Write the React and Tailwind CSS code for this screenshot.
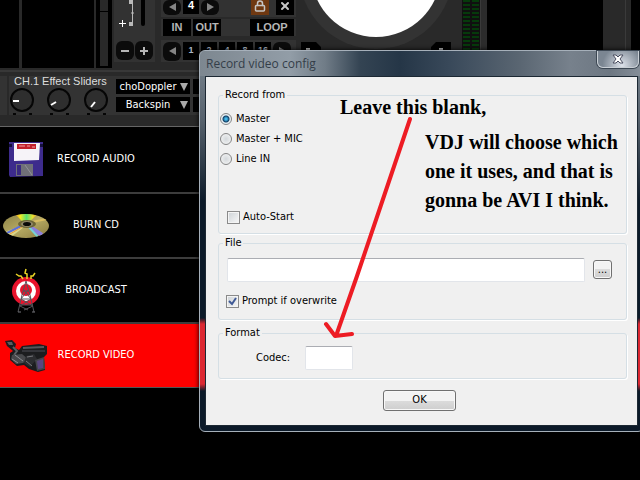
import { Lock, X } from 'lucide-react';
import clsx from 'clsx';

const tahoma = "font-['DejaVu_Sans_Condensed','DejaVu_Sans',sans-serif]";

const loopSizes = ['1', '2', '4', '8', '16'];

const effects = ['choDoppler', 'Backspin'];

const menuItems = [
  { label: 'RECORD AUDIO', icon: FloppyIcon },
  { label: 'BURN CD', icon: DiscIcon },
  { label: 'BROADCAST', icon: BroadcastIcon },
  { label: 'RECORD VIDEO', icon: CameraIcon, active: true },
];

function FloppyIcon() {
  return (
    <svg width="36" height="36" viewBox="0 0 36 36" aria-hidden="true">
      <path d="M1 0H35V34L2 35L1 33Z" fill="#3d2b8c" />
      <path d="M1 2H4V5H1ZM32 2H35V5H32Z" fill="#15103c" />
      <path d="M6 1H32L31 18L6 19Z" fill="#f6f3f8" />
      <path d="M9 2H28V7H9Z" fill="#c3202c" />
      <path d="M11 4H17M19 4H22M24 5H27" stroke="#f0a0a4" />
      <path d="M8 22H25V34H8Z" fill="#707078" />
      <path d="M9 23H13V33H9Z" fill="#3a2a80" />
      <path d="M17 23L24 33" stroke="#92929a" />
    </svg>
  );
}

function DiscIcon() {
  return (
    <svg width="48" height="26" viewBox="0 0 48 26" aria-hidden="true">
      <defs>
        <linearGradient id="disc" x1="0" y1="0" x2="1" y2="1">
          <stop offset="0" stopColor="#8c8246" />
          <stop offset="0.5" stopColor="#b5a962" />
          <stop offset="1" stopColor="#887a40" />
        </linearGradient>
        <linearGradient id="shine" x1="0" x2="1">
          <stop offset="0" stopColor="#f07820" />
          <stop offset="0.25" stopColor="#f4ec20" />
          <stop offset="0.5" stopColor="#58e070" />
          <stop offset="0.75" stopColor="#e8e030" />
          <stop offset="1" stopColor="#d87830" />
        </linearGradient>
        <clipPath id="rim"><ellipse cx="24" cy="13" rx="23" ry="12" /></clipPath>
      </defs>
      <ellipse cx="24" cy="13" rx="23" ry="12" fill="url(#disc)" />
      <g clipPath="url(#rim)">
        <path d="M12 0H37L27 9H21Z" fill="url(#shine)" />
        <path d="M18 13L3 19L9 24L22 14Z" fill="#d8d68a" />
        <path d="M19 13L5 20" stroke="#5d70d8" strokeWidth="2" />
        <path d="M20 14L8 21" stroke="#ef9b38" strokeWidth="1" />
        <path d="M28 14L40 22" stroke="#8d80dc" strokeWidth="4" />
        <path d="M27 14L36 24" stroke="#77d0d4" strokeWidth="2" />
        <path d="M30 9L45 6" stroke="#d9bd62" strokeWidth="2" />
      </g>
      <ellipse cx="25" cy="11" rx="9" ry="4" fill="#6c6535" />
      <ellipse cx="25" cy="11" rx="6" ry="3" fill="#8f8768" />
      <ellipse cx="25" cy="11" rx="4" ry="2" fill="#0a0a08" />
    </svg>
  );
}

function BroadcastIcon() {
  return (
    <svg width="30" height="46" viewBox="0 0 30 46" aria-hidden="true">
      <circle cx="15" cy="23" r="14" fill="#e8132c" />
      <circle cx="15" cy="23" r="10" fill="#fff" />
      <circle cx="15" cy="22" r="6" fill="#e8132c" />
      <path d="M16 11V6L14 5L15 1M12 11L10 8H8L5 6M20 11V8L22 8L24 5" stroke="#e8d326" strokeWidth="1.5" fill="none" />
      <path d="M15 13L11 27L7 44M15 13L19 27L23 44M12 23H18M10 31H20M9 37H22M13 22L20 31L9 38L17 42M17 22L10 31L22 38L13 42" stroke="#55555a" fill="none" />
      <path d="M7 44H10M21 44H24" stroke="#77777c" />
    </svg>
  );
}

function CameraIcon() {
  return (
    <svg width="44" height="34" viewBox="0 0 44 34" aria-hidden="true">
      <path d="M1 2L8 1L12 5L11 9L15 11L18 7L35 5L43 7V15L40 18L41 31L34 33L25 30L20 26L13 27L6 21V14L9 12L3 7Z" fill="#1c1d1f" />
      <path d="M3 3L8 3L9 6L5 6Z" fill="#5a5c60" />
      <path d="M9 8L13 12L10 16" stroke="#5c5e62" strokeWidth="2" fill="none" />
      <path d="M19 9L40 8" stroke="#55565a" strokeWidth="2" />
      <path d="M18 12L41 12" stroke="#34353a" strokeWidth="2" />
      <path d="M8 16L18 15L24 20L19 24L12 25L7 20Z" fill="#48494c" />
      <path d="M8 20L14 24M11 16L19 22" stroke="#8b8c90" />
      <path d="M22 17L30 15L33 20L26 28L20 24Z" fill="#2c2d30" />
      <path d="M23 18L29 17M22 22L28 27" stroke="#76777b" />
      <path d="M31 21L40 18L41 30L33 32Z" fill="#45464b" />
      <path d="M33 22L39 20L39 29L34 30Z" fill="#5a4580" />
    </svg>
  );
}

function Triangle({ left }) {
  return (
    <svg width="7" height="8" viewBox="0 0 7 8" aria-hidden="true">
      <path d={left ? 'M7 0V8L0 4Z' : 'M0 0V8L7 4Z'} fill="#858585" />
    </svg>
  );
}

function RoundButton({ label, className, children }) {
  return (
    <button
      aria-label={label}
      className={clsx('flex w-[18px] shrink-0 items-center justify-center rounded-md bg-[#0b0b0b]', className)}
    >
      {children}
    </button>
  );
}

function PadButton({ className, children }) {
  return (
    <button
      className={clsx("h-[17px] bg-black font-['Liberation_Sans',sans-serif] text-[11px] leading-[17px] font-bold text-[#b5b5b5]", className)}
    >
      {children}
    </button>
  );
}

function PitchPanel() {
  return (
    <div className="ml-0.5 flex h-[62px] w-[41px] shrink-0 flex-col items-center justify-between bg-[#323232] pb-0.5">
      <svg width="41" height="28" viewBox="0 0 41 28" aria-hidden="true">
        <path d="M15 0H19V26H15V22H18V4H15Z" fill="#b9b9b9" />
        <path d="M17 13H20" stroke="#b9b9b9" />
        <path d="M8.5 20V27M5 23.5H12" stroke="#fff" />
        <path d="M29 0V24" stroke="#000" strokeWidth="4" strokeLinecap="round" />
      </svg>
      <div className="flex gap-px">
        <RoundButton label="Pitch down" className="h-[19px]">
          <svg width="8" height="8"><path d="M0 4H8" stroke="#b5b5b5" strokeWidth="2" /></svg>
        </RoundButton>
        <RoundButton label="Pitch up" className="h-[19px]">
          <svg width="8" height="8"><path d="M0 4H8M4 0V8" stroke="#b5b5b5" strokeWidth="2" /></svg>
        </RoundButton>
      </div>
    </div>
  );
}

function LoopPanel() {
  return (
    <div className="ml-1.5 flex w-[135px] shrink-0 flex-col">
      <div className="flex h-[17px] items-start bg-[#323232] px-0.5">
        <RoundButton label="Shorter loop" className="h-[15px] pb-0.5"><Triangle left /></RoundButton>
        <span className="mx-0.5 h-[14px] w-4 bg-black text-center font-['Liberation_Sans',sans-serif] text-[11px] leading-[10px] font-bold text-white">4</span>
        <RoundButton label="Longer loop" className="h-[15px] pb-0.5"><Triangle /></RoundButton>
        <button aria-label="Lock" className="ml-auto flex h-[15px] w-[18px] items-center justify-center bg-[#6f3811] pb-1">
          <Lock className="size-3 text-[#c5c5c5]" strokeWidth={3} />
        </button>
        <button aria-label="Clear loop" className="ml-[7px] flex h-[15px] w-[18px] items-center justify-center bg-black pb-1">
          <X className="size-3 text-[#c5c5c5]" strokeWidth={4} />
        </button>
      </div>
      <div className="mt-0.5 flex gap-0.5 bg-[#323232] px-0.5">
        <PadButton className="w-7">IN</PadButton>
        <PadButton className="w-7">OUT</PadButton>
        <PadButton className="ml-auto w-11">LOOP</PadButton>
      </div>
      <div className="mt-1 flex h-[22px] items-center gap-0.5 bg-[#323232] px-0.5">
        <RoundButton label="Previous" className="h-[19px]"><Triangle left /></RoundButton>
        {loopSizes.map((size) => (
          <button
            key={size}
            className="h-[18px] w-4 shrink-0 bg-black font-['Liberation_Sans',sans-serif] text-[9px] font-bold text-[#a9b6c4]"
          >
            {size}
          </button>
        ))}
        <RoundButton label="Next" className="h-[19px]"><Triangle /></RoundButton>
      </div>
    </div>
  );
}

function Deck() {
  return (
    <div className="flex h-[70px] overflow-hidden bg-[#292929]">
      <div className="h-[68px] w-[19px] shrink-0 bg-black" />
      <div className="ml-[3px] h-[68px] w-[72px] shrink-0 bg-black" />
      <div className="ml-0.5 flex h-[68px] w-4 shrink-0 flex-col gap-px bg-black px-1 pb-0.5">
        <div className="h-[11px] bg-[#292929]" />
        <div className="flex-1 bg-[#292929]" />
      </div>
      <PitchPanel />
      <LoopPanel />
      <svg className="shrink-0" width="166" height="69" viewBox="297 0 166 69" aria-label="Platter">
        <circle cx="377" cy="-28" r="77" fill="#333" />
        <circle cx="377" cy="-28" r="65" fill="#fff" />
        <path d="M302 42H317L322 47V60H302ZM452 42H437L432 47V60H452Z" fill="#000" />
        <path d="M307 49H311M440 49H444" stroke="#bbb" strokeWidth="2" />
      </svg>
      <div className="flex w-[18px] shrink-0 justify-center gap-0.5 bg-[#101010]">
        <div className="w-[7px] bg-[repeating-linear-gradient(#063a0b_0_2px,#101010_2px_4px)]" />
        <div className="w-[7px] bg-[repeating-linear-gradient(#063a0b_0_2px,#101010_2px_4px)]" />
      </div>
      <div className="w-[7px] shrink-0 border-l border-[#3a3a3a] bg-[#2c2c2c]" />
      <div className="flex-1 bg-black" />
      <div className="flex w-7 shrink-0 justify-end bg-[#292929]">
        <div className="w-1.5 border-l border-[#3a3a3a]" />
      </div>
      <div className="w-[9px] shrink-0 bg-black" />
    </div>
  );
}

function Knob({ needle }) {
  return (
    <svg width="25" height="28" viewBox="0 0 25 28" aria-hidden="true">
      <circle cx="12" cy="13" r="11" fill="#2e2e2e" stroke="#060606" strokeWidth="2" />
      <path d={needle} stroke="#fff" strokeWidth="2" />
      <path d="M3 27H6M19 27H22" stroke="#050505" strokeWidth="2" />
    </svg>
  );
}

function EffectRow() {
  return (
    <div className="border-t-2 border-b border-t-[#383838] border-b-[#666] bg-[#292929] pt-1 pb-[11px]">
      <div className="flex h-[39px] bg-[#333]">
        <div className="w-[9px] shrink-0 border-r-2 border-[#292929]" />
        <div className="w-[107px] shrink-0 pl-px">
          <p className="pl-1 font-['Liberation_Sans',sans-serif] text-[11px] leading-[11px] whitespace-nowrap text-[#ddd]">
            CH.1 Effect Sliders
          </p>
          <div className="flex gap-3">
            <Knob needle="M3 14H9" />
            <Knob needle="M4 18L9 15" />
            <Knob needle="M7 20L11 15" />
          </div>
        </div>
        <div className="flex flex-col gap-[3px] pt-[3px]">
          {effects.map((effect) => (
            <div key={effect} className="flex items-center gap-[3px]">
              <label className="flex h-[15px] w-[74px] items-center bg-black pr-0.5">
                <select
                  aria-label="Effect"
                  className={clsx('w-full appearance-none bg-transparent text-center text-[11px] leading-[15px] text-white', tahoma)}
                >
                  <option>{effect}</option>
                </select>
                <svg className="shrink-0" width="8" height="8" viewBox="0 0 8 8"><path d="M0 0H8L4 8Z" fill="#aaa" /></svg>
              </label>
              <div className="h-[15px] w-1.5 bg-black" />
            </div>
          ))}
        </div>
      </div>
    </div>
  );
}

function Menu() {
  return (
    <nav className="w-[199px] border-b border-[#555]">
      {menuItems.map(({ label, icon: Icon, active }, i) => (
        <button
          key={label}
          className={clsx(
            'flex h-[65px] w-full items-center text-[11px] text-white',
            tahoma,
            i > 0 && 'border-t-2 border-[#3c3c3c]',
            active ? 'bg-[#fe0000]' : 'bg-black'
          )}
        >
          <span className="flex w-[52px] shrink-0 justify-center"><Icon /></span>
          <span className="w-[88px] text-center whitespace-nowrap">{label}</span>
        </button>
      ))}
    </nav>
  );
}

function Group({ title, className, children }) {
  return (
    <fieldset className={clsx('min-w-0 rounded-[3px] border border-[#d5dfe5] px-1 shadow-[1px_1px_0_#fff]', className)}>
      <legend className="px-0.5 leading-[14px]">{title}</legend>
      {children}
    </fieldset>
  );
}

function Radio({ label, checked }) {
  return (
    <label className="flex h-5 items-center gap-1">
      <input
        type="radio"
        name="source"
        defaultChecked={checked}
        className="size-3 appearance-none rounded-full border border-[#858585] bg-[radial-gradient(#d4d8db,#f8f8f8)] checked:bg-[radial-gradient(circle,#43b8ea_0_1px,#123f66_3px,#e8f0f4_4px)]"
      />
      {label}
    </label>
  );
}

function Check({ label, checked, className }) {
  return (
    <label className={clsx('flex h-5 items-center gap-[3px] pl-[3px]', className)}>
      <span className="grid size-[13px] place-items-center">
        <input
          type="checkbox"
          defaultChecked={checked}
          className="peer col-start-1 row-start-1 size-[13px] appearance-none border border-[#8a8a8a] bg-linear-to-br from-[#cdd2d6] to-[#f8f8f8] shadow-[inset_0_0_0_1px_#f4f4f4]"
        />
        <svg className="pointer-events-none invisible z-10 col-start-1 row-start-1 peer-checked:visible" width="9" height="9" viewBox="0 0 9 9">
          <path d="M1 4L4 7L8 1" stroke="#405a96" strokeWidth="2" fill="none" />
        </svg>
      </span>
      {label}
    </label>
  );
}

const fieldClass = 'h-6 rounded-xs border border-[#e2e5ea] border-t-[#abadb3] bg-white px-1';
const buttonClass =
  'rounded-[3px] border border-[#707070] bg-[linear-gradient(#f3f3f3_0_50%,#dcdcdc_50%,#cecece)] shadow-[inset_0_0_0_1px_#f8f8f8]';

function RecordDialog() {
  return (
    <section
      aria-label="Record video config"
      className="absolute top-[50px] -right-1 left-[199px] rounded-t-md rounded-b-md border border-[#a6b0ba] bg-[linear-gradient(#7b8791_0,#56616c_70px,#0c1a29_150px,#0c1a29_267px,#dc2832_273px,#dc2832_333px,#0c1a29_340px)] px-[5px] pb-[5px] shadow-[0_0_5px_#000]"
    >
      <header className="-mx-[5px] flex h-[25px] justify-between rounded-t-md bg-[linear-gradient(90deg,#7d8790_0,#929da7_90px,#707c87_125px,#344453_160px,#253647_200px,#39495a_250px,#5a6672_320px,#77818c_370px,#6d7782_410px,#858e98_440px)] pr-1">
        <h1 className="pl-1.5 font-['Open_Sans','Noto_Sans',sans-serif] text-xs leading-[25px] text-[#343e49]">Record video config</h1>
        <button
          aria-label="Close"
          className="flex h-[17px] w-[42px] items-center justify-center rounded-b-md border border-t-0 border-[#c9cfd5] bg-[radial-gradient(circle_at_60%_90%,#dde2ea,#7b8692_70%)] shadow-[0_0_0_1px_#3c4753]"
        >
          <svg width="12" height="10" viewBox="0 0 12 10">
            <path d="M1 1H4L6 3L8 1H11L8 5L11 9H8L6 7L4 9H1L4 5Z" fill="#fff" stroke="#4a4e60" />
          </svg>
        </button>
      </header>
      <form
        className={clsx('border border-[#8c979f] bg-[#f0f0f0] pt-[11px] pr-2.5 pb-3.5 pl-3 text-[11px] text-black outline-1 -outline-offset-1 outline-[#1c2833]', tahoma)}
        onSubmit={(e) => e.preventDefault()}
      >
        <Group title="Record from" className="pb-1.5">
          <div className="-ml-1 pt-[7px] pl-px">
            <Radio label="Master" checked />
            <Radio label="Master + MIC" />
            <Radio label="Line IN" />
            <Check label="Auto-Start" className="mt-[38px] ml-1" />
          </div>
        </Group>
        <Group title="File" className="mt-0.5 pb-2">
          <div className="flex items-start gap-2 pt-2 pr-2.5 pl-1">
            <input type="text" aria-label="File" className={clsx('min-w-0 flex-1', fieldClass)} />
            <button className={clsx('mt-0.5 h-[19px] w-[19px] leading-[15px]', buttonClass)}>...</button>
          </div>
          <Check label="Prompt if overwrite" checked className="mt-[9px]" />
        </Group>
        <Group title="Format" className="mt-1.5 pb-2">
          <div className="flex items-center pt-1.5 pl-[33px]">
            <label htmlFor="codec" className="w-[49px]">Codec:</label>
            <input id="codec" type="text" className={clsx('w-12', fieldClass)} />
          </div>
        </Group>
        <div className="mt-[11px] flex justify-center pr-1.5">
          <button className={clsx('h-[21px] w-[73px]', buttonClass)}>OK</button>
        </div>
      </form>
    </section>
  );
}

function Annotations() {
  const note = "absolute font-['Liberation_Serif',serif] text-xl leading-[29px] font-bold text-black";
  return (
    <div className="pointer-events-none">
      <p className={clsx(note, 'top-[93px] left-[340px] whitespace-nowrap')}>Leave this blank,</p>
      <p className={clsx(note, 'top-[128px] left-[425px] whitespace-nowrap')}>
        VDJ will choose which
        <br />
        one it uses, and that is
        <br />
        gonna be AVI I think.
      </p>
      <svg className="absolute top-[115px] left-[320px]" width="100" height="230" viewBox="320 115 100 230" aria-hidden="true">
        <path d="M410 119L381 205L357 276L336 336M326 324L335 336L352 334" stroke="#ed1c24" strokeWidth="4" strokeLinecap="round" strokeLinejoin="round" fill="none" />
      </svg>
    </div>
  );
}

export default function App() {
  return (
    <main className="relative min-h-screen overflow-hidden bg-black">
      <Deck />
      <EffectRow />
      <Menu />
      <RecordDialog />
      <Annotations />
    </main>
  );
}
